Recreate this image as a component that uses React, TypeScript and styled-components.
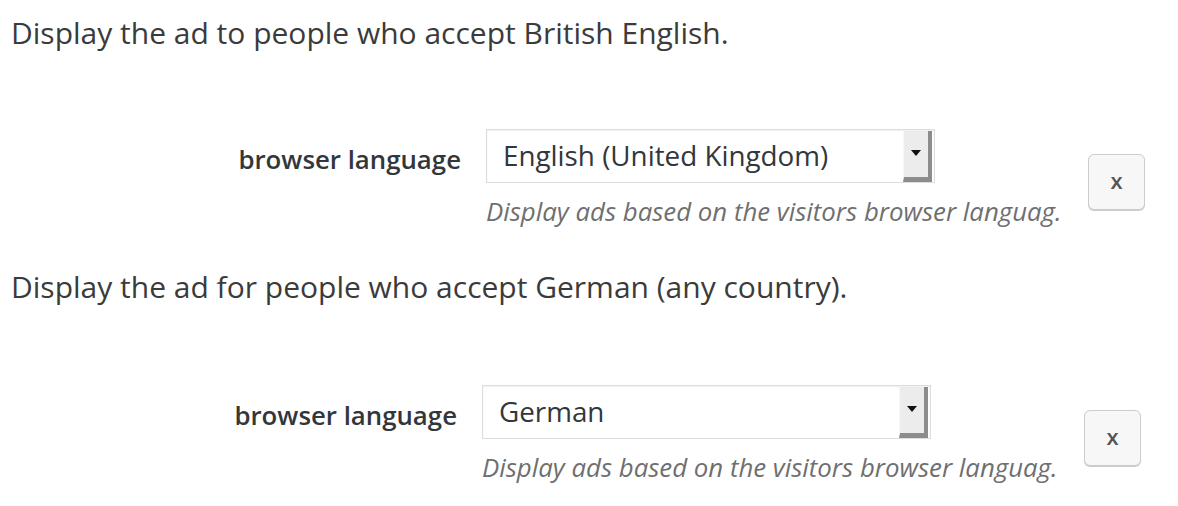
import React from "react";
import styled, { createGlobalStyle } from "styled-components";

const Global = createGlobalStyle`
  html, body { margin: 0; padding: 0; background: #ffffff; }
  body { font-family: "Open Sans", "Noto Sans", sans-serif; color: #444444; }
`;

const Page = styled.div`
  display: flex;
  flex-direction: column;
  padding: 15px 0 0 11px;
  width: 1178px;
  height: 506px;
  box-sizing: border-box;
  overflow: hidden;
`;

const Heading = styled.p<{ $gap: number }>`
  margin: ${(p) => p.$gap}px 0 0 0;
  font-size: 30px;
  line-height: 36px;
  color: #3b3b3b;
  white-space: nowrap;
`;

const Row = styled.div<{ $indent: number; $gap: number }>`
  display: flex;
  align-items: flex-start;
  margin-top: ${(p) => p.$gap}px;
  padding-left: ${(p) => p.$indent}px;
`;

const LabelCell = styled.div`
  width: 261px;
  box-sizing: border-box;
  padding: 3px 25px 0 0;
  height: 54px;
  line-height: 54px;
  text-align: right;
  font-size: 25.8px;
  font-weight: 600;
  color: #32373c;
  white-space: nowrap;
`;

const FieldCell = styled.div`
  display: flex;
  flex-direction: column;
  width: 449px;
`;

const Select = styled.div`
  display: flex;
  align-items: stretch;
  height: 54px;
  box-sizing: border-box;
  border: 1px solid #dddddd;
  box-shadow: inset 0 1px 2px rgba(0, 0, 0, 0.07);
  background: #ffffff;
  padding-right: 2px;
`;

const SelectValue = styled.div`
  flex: 1;
  padding-left: 16px;
  line-height: 50px;
  font-size: 27.8px;
  color: #32373c;
  white-space: nowrap;
`;

const ArrowPart = styled.div`
  width: 24px;
  margin-top: 1px;
  background: #ececec;
  border-left: 1px solid #f7f7f7;
  border-right: 4px solid #8c8c8c;
  border-bottom: 5px solid #8c8c8c;
  display: flex;
  align-items: center;
  justify-content: center;
  padding-bottom: 2px;
`;

const Triangle = styled.div`
  width: 0;
  height: 0;
  border-left: 5px solid transparent;
  border-right: 5px solid transparent;
  border-top: 6px solid #111111;
`;

const Description = styled.div`
  margin-top: 13px;
  font-size: 25.8px;
  line-height: 30px;
  font-style: italic;
  color: #6f6f6f;
  white-space: nowrap;
`;

const RemoveButton = styled.button`
  margin: 25px 0 0 153px;
  width: 57px;
  height: 56px;
  box-sizing: border-box;
  border: 1px solid #cccccc;
  border-radius: 6px;
  background: #f7f7f7;
  box-shadow: 0 1px 0 #cccccc;
  font-family: "Open Sans", "Noto Sans", sans-serif;
  font-size: 22px;
  font-weight: 600;
  color: #555555;
  padding: 0 0 4px 0;
  cursor: pointer;
`;

type RuleProps = { indent: number; gap: number; value: string };

const Rule = ({ indent, gap, value }: RuleProps) => (
  <Row $indent={indent} $gap={gap}>
    <LabelCell>browser language</LabelCell>
    <FieldCell>
      <Select>
        <SelectValue>{value}</SelectValue>
        <ArrowPart>
          <Triangle />
        </ArrowPart>
      </Select>
      <Description>Display ads based on the visitors browser languag.</Description>
    </FieldCell>
    <RemoveButton>x</RemoveButton>
  </Row>
);

export default function App() {
  return (
    <>
      <Global />
      <Page>
        <Heading $gap={0}>Display the ad to people who accept British English.</Heading>
        <Rule indent={214} gap={78} value="English (United Kingdom)" />
        <Heading $gap={43}>Display the ad for people who accept German (any country).</Heading>
        <Rule indent={210} gap={80} value="German" />
      </Page>
    </>
  );
}
